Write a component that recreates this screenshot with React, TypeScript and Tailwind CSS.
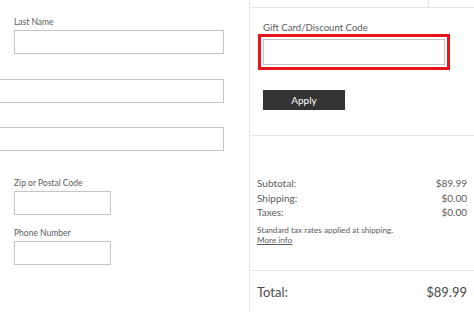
import React from 'react';

const font = { fontFamily: 'Lato, "Open Sans", "Liberation Sans", sans-serif' };

const Field: React.FC<{ label?: string; className?: string; boxClass: string }> = ({ label, className, boxClass }) => (
    <div className={className}>
        {label && <div className="text-[8.5px] leading-[12px] text-[#5c5c5c] mb-[2px]">{label}</div>}
        <div className={`h-[24px] border border-[#c4c4c4] bg-white ${boxClass}`} />
    </div>
);

export default function App() {
    return (
        <div className="flex w-[474px] h-[312px] bg-white overflow-hidden text-[#444]" style={font}>
            {/* Shipping form column */}
            <div className="w-[250px] shrink-0 border-r border-[#e6e6e6] overflow-hidden pl-[14px]">
                <Field label="Last Name" className="mt-[16px]" boxClass="w-[210px]" />
                <Field className="mt-[25px] ml-[-16px]" boxClass="w-[226px]" />
                <Field className="mt-[24px] ml-[-16px]" boxClass="w-[226px]" />
                <Field label="Zip or Postal Code" className="mt-[26px]" boxClass="w-[97px]" />
                <Field label="Phone Number" className="mt-[12px]" boxClass="w-[97px]" />
            </div>

            {/* Order summary column */}
            <div className="flex-1 flex flex-col">
                <div className="h-[8px] border-b border-[#e6e6e6] flex">
                    <div className="w-[179px] border-r border-[#e6e6e6]" />
                </div>

                <div className="h-[128px] border-b border-[#e6e6e6] pl-[13px]">
                    <div className="mt-[13px] text-[9.6px] leading-[13px] text-[#5c5c5c]">Gift Card/Discount Code</div>
                    <div className="ml-[-5px] w-[192px] h-[36px] border-[3px] border-[#e8141b] p-[2px]">
                        <div className="h-full border border-[#c4c4c4] bg-white" />
                    </div>
                    <button className="mt-[20px] w-[82px] h-[20px] bg-[#333] text-white text-[10px] leading-[20px]">
                        Apply
                    </button>
                </div>

                <div className="h-[135px] border-b border-[#e6e6e6] pl-[7px] pr-[7px] pt-[40px] text-[10px] leading-[14.5px] text-[#5c5c5c]">
                    <div className="flex justify-between"><span>Subtotal:</span><span>$89.99</span></div>
                    <div className="flex justify-between"><span>Shipping:</span><span>$0.00</span></div>
                    <div className="flex justify-between"><span>Taxes:</span><span>$0.00</span></div>
                    <div className="mt-[5px] text-[8.2px] leading-[10px]">
                        Standard tax rates applied at shipping.
                        <br />
                        <a className="underline">More info</a>
                    </div>
                </div>

                <div className="flex justify-between pl-[7px] pr-[7px] pt-[13px] text-[13px] leading-[16px] text-[#4a4a4a]">
                    <span>Total:</span>
                    <span>$89.99</span>
                </div>
            </div>
        </div>
    );
}
